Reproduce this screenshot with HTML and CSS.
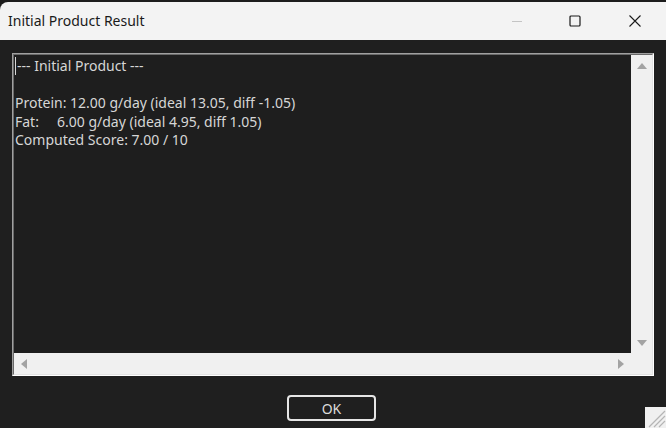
FILE: index.html
```html
<!DOCTYPE html>
<html lang="en">
<head>
    <meta charset="UTF-8">
    <title>Initial Product Result</title>
    <link rel="stylesheet" href="styles.css">
</head>
<body>
    <div class="window">
        <div class="titlebar">
            <span class="title">Initial Product Result</span>
            <div class="controls">
                <span class="ctl minimize"><svg width="12" height="12" viewBox="0 0 12 12"><path d="M1 6.5h10" stroke="#c4c4c4" stroke-width="1"/></svg></span>
                <span class="ctl"><svg width="12" height="12" viewBox="0 0 12 12"><rect x="1" y="1" width="10" height="10" rx="1" fill="none" stroke="#1a1a1a" stroke-width="1.2"/></svg></span>
                <span class="ctl close"><svg width="12" height="12" viewBox="0 0 12 12"><path d="M0.5 0.5l11 11M11.5 0.5l-11 11" stroke="#1a1a1a" stroke-width="1.1"/></svg></span>
            </div>
        </div>

        <div class="client">
            <div class="edit">
                <div class="edit-inner">
                    <div class="text"><span class="caret"></span>--- Initial Product ---

Protein: 12.00 g/day (ideal 13.05, diff -1.05)
Fat:	6.00 g/day (ideal 4.95, diff 1.05)
Computed Score: 7.00 / 10</div>
                    <div class="vscroll">
                        <svg width="10" height="6" viewBox="0 0 10 6"><path d="M5 0L10 6H0z" fill="#a3a3a3"/></svg>
                        <svg width="10" height="6" viewBox="0 0 10 6"><path d="M5 6L10 0H0z" fill="#a3a3a3"/></svg>
                    </div>
                    <div class="hscroll">
                        <svg width="6" height="10" viewBox="0 0 6 10"><path d="M0 5L6 0V10z" fill="#a3a3a3"/></svg>
                        <svg width="6" height="10" viewBox="0 0 6 10"><path d="M6 5L0 0V10z" fill="#a3a3a3"/></svg>
                    </div>
                    <div class="corner"></div>
                </div>
            </div>

            <div class="buttons">
                <button type="button" class="ok">OK</button>
            </div>

            <div class="grip">
                <svg width="21" height="21" viewBox="0 0 21 21"><path d="M20 9L9 20M20 14L14 20M20 4L4 20" stroke="#b5b5b5" stroke-width="1.2"/></svg>
            </div>
        </div>
    </div>
</body>
</html>
```

FILE: styles.css
```css
* {
    box-sizing: border-box;
    margin: 0;
    padding: 0;
}

body {
    width: 666px;
    height: 428px;
    overflow: hidden;
    background-color: #1c1c1c;
    font-family: 'Noto Sans', 'Open Sans', sans-serif;
}

.window {
    padding-top: 2px;
    height: 100%;
    display: flex;
    flex-direction: column;
}

.titlebar {
    height: 38px;
    background-color: #f3f3f3;
    border-top-left-radius: 8px;
    display: flex;
    align-items: center;
    justify-content: space-between;
    padding-left: 8px;
}

.title {
    font-size: 14px;
    color: #1a1a1a;
    padding-bottom: 1px;
}

.controls {
    display: flex;
    height: 100%;
}

.ctl {
    width: 58px;
    display: flex;
    align-items: center;
    justify-content: center;
}

.ctl.close {
    width: 62px;
}

.client {
    flex: 1;
    background-color: #1f1f1f;
    position: relative;
    padding: 13px 12px 0 12px;
}

.edit {
    height: 323px;
    border: 1px solid;
    border-color: #a0a0a0 #ffffff #ffffff #a0a0a0;
}

.edit-inner {
    height: 100%;
    border: 1px solid;
    border-color: #696969 #e3e3e3 #e3e3e3 #696969;
    display: grid;
    grid-template-columns: 1fr 21px;
    grid-template-rows: 1fr 21px;
    background-color: #1e1e1e;
}

.text {
    white-space: pre;
    tab-size: 42px;
    color: #d6d6d6;
    font-size: 14px;
    line-height: 18.5px;
    padding: 2px 0 0 1px;
    overflow: hidden;
}

.caret {
    display: inline-block;
    width: 1px;
    height: 18px;
    background-color: #d6d6d6;
    vertical-align: -4px;
    margin-right: 1px;
}

.vscroll {
    background-color: #f0f0f0;
    display: flex;
    flex-direction: column;
    align-items: center;
    justify-content: space-between;
    padding: 8px 0 7px;
}

.hscroll {
    background-color: #f0f0f0;
    display: flex;
    align-items: center;
    justify-content: space-between;
    padding: 0 7px 0 7px;
}

.corner {
    background-color: #f0f0f0;
}

.buttons {
    display: flex;
    justify-content: center;
    padding-top: 19px;
    padding-right: 3px;
}

.ok {
    width: 89px;
    height: 26px;
    background-color: #1f1f1f;
    color: #dcdcdc;
    border: 2px solid #e6e6e6;
    border-radius: 4px;
    font-family: 'Noto Sans', 'Open Sans', sans-serif;
    font-size: 14px;
}

.grip {
    position: absolute;
    right: 0;
    bottom: 0;
    width: 21px;
    height: 21px;
    background-color: #f0f0f0;
}
```
